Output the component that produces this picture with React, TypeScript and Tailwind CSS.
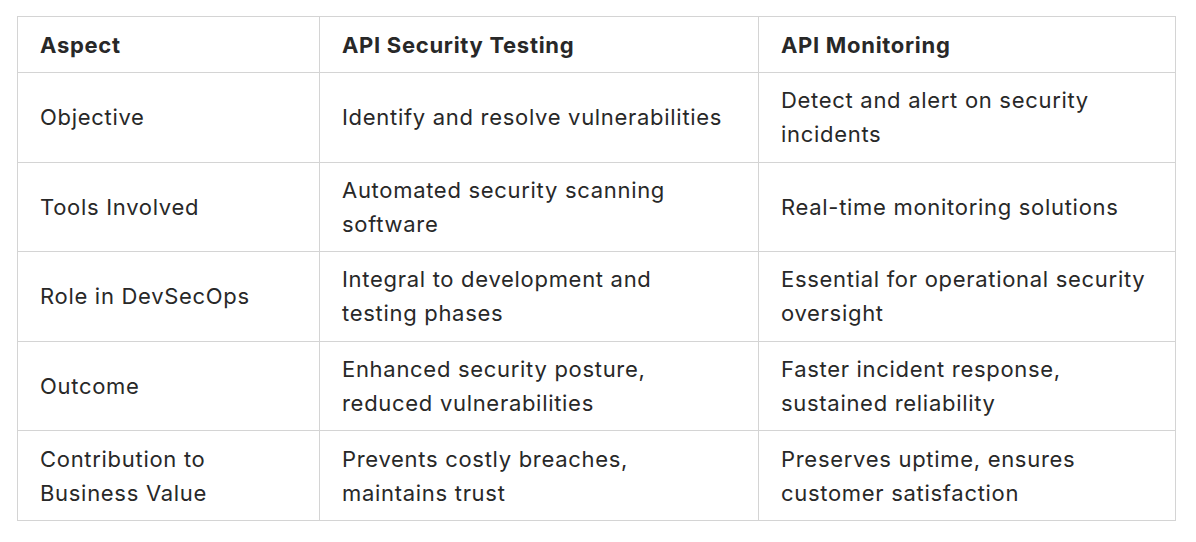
import React from 'react';

const rows: [string, string, string][] = [
  ['Objective', 'Identify and resolve vulnerabilities', 'Detect and alert on security incidents'],
  ['Tools Involved', 'Automated security scanning software', 'Real-time monitoring solutions'],
  ['Role in DevSecOps', 'Integral to development and testing phases', 'Essential for operational security oversight'],
  ['Outcome', 'Enhanced security posture, reduced vulnerabilities', 'Faster incident response, sustained reliability'],
  ['Contribution to Business Value', 'Prevents costly breaches, maintains trust', 'Preserves uptime, ensures customer satisfaction'],
];

export default function App() {
  return (
    <div className="min-h-screen bg-white pt-4 pl-[17px] font-['Inter',sans-serif] text-[#282828]">
      <table className="w-[1158px] table-fixed border-collapse text-[22px] leading-[34px] tracking-[0.7px]">
        <colgroup>
          <col className="w-[302px]" />
          <col className="w-[439px]" />
          <col className="w-[417px]" />
        </colgroup>
        <thead>
          <tr className="h-[56px]">
            {['Aspect', 'API Security Testing', 'API Monitoring'].map((h) => (
              <th key={h} className="border border-[#d4d4d4] pl-[22px] pr-[26px] py-[10px] text-left font-bold">
                {h}
              </th>
            ))}
          </tr>
        </thead>
        <tbody>
          {rows.map((r, i) => (
            <tr key={i} className="h-[89.6px]">
              {r.map((c, j) => (
                <td key={j} className="border border-[#d4d4d4] pl-[22px] pr-[26px] py-[10px] align-middle">
                  {c}
                </td>
              ))}
            </tr>
          ))}
        </tbody>
      </table>
    </div>
  );
}
